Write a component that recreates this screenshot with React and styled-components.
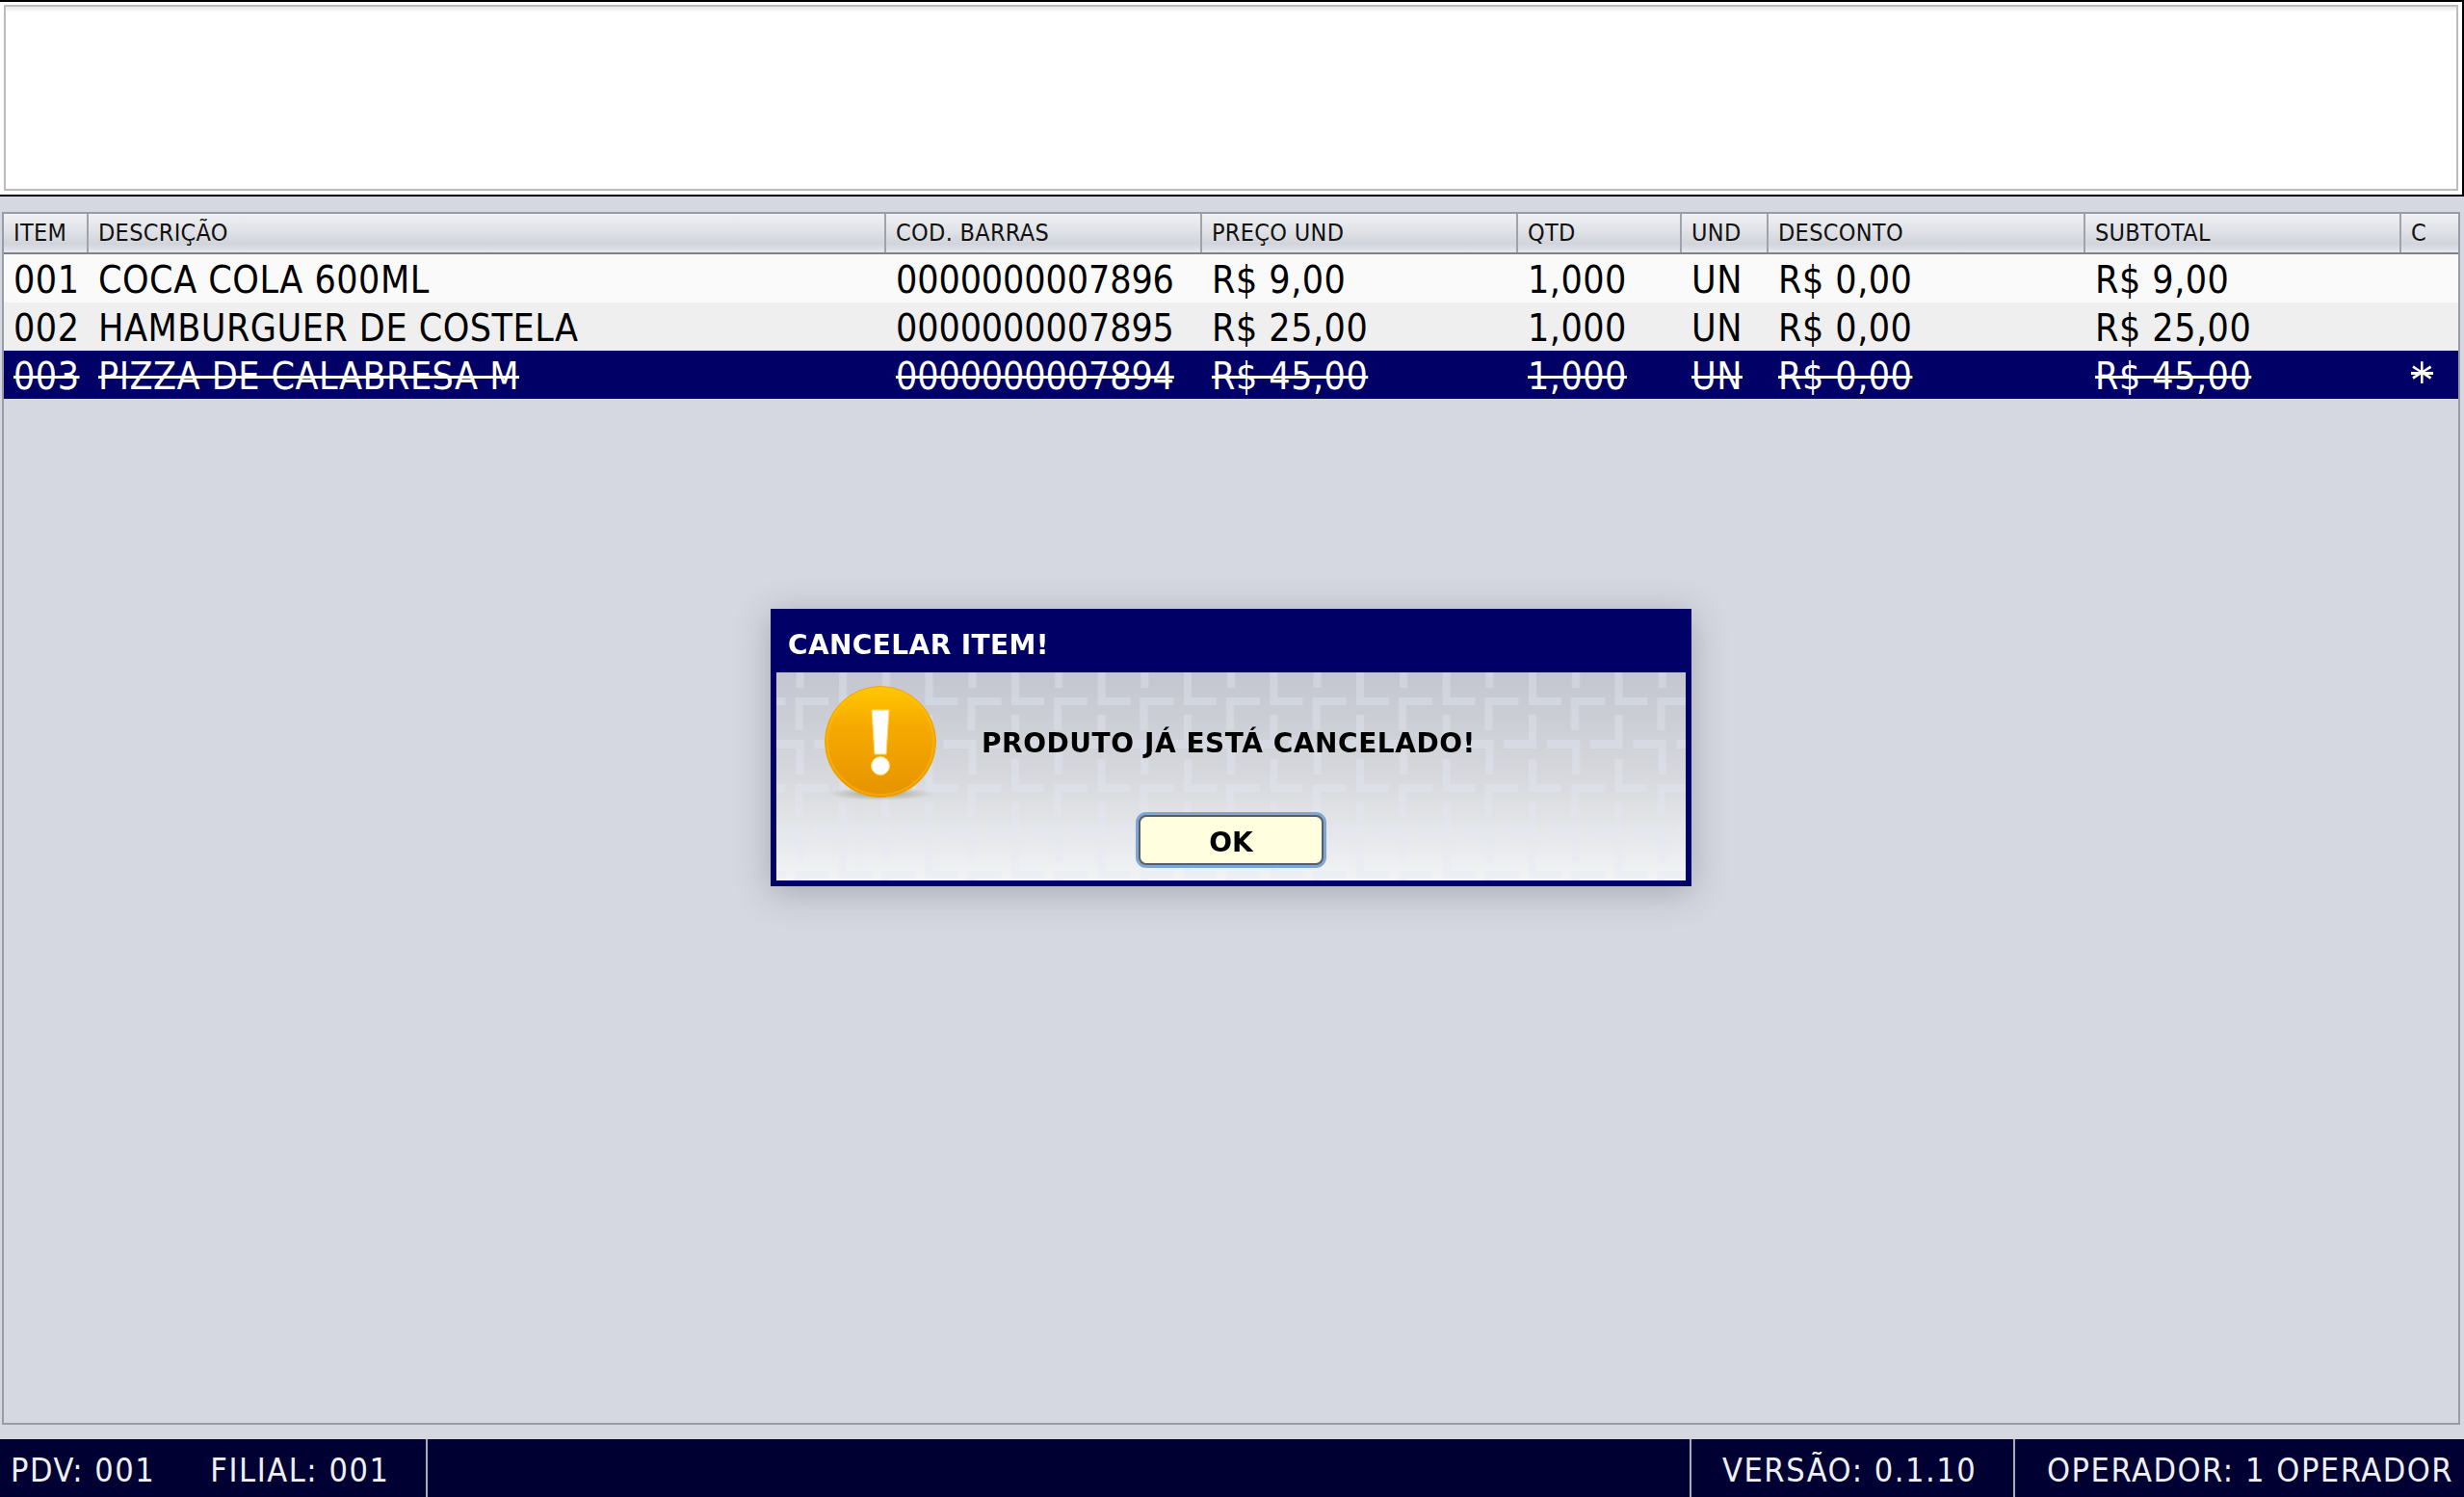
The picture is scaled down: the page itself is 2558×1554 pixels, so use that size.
import React from 'react'
import styled, { createGlobalStyle } from 'styled-components'

const COLUMNS = '88px 828px 328px 328px 170px 90px 329px 328px 59px'

const HEADERS = ['ITEM', 'DESCRIÇÃO', 'COD. BARRAS', 'PREÇO UND', 'QTD', 'UND', 'DESCONTO', 'SUBTOTAL', 'C']

const ITEMS = [
  ['001', 'COCA COLA 600ML', '0000000007896', 'R$ 9,00', '1,000', 'UN', 'R$ 0,00', 'R$ 9,00', ''],
  ['002', 'HAMBURGUER DE COSTELA', '0000000007895', 'R$ 25,00', '1,000', 'UN', 'R$ 0,00', 'R$ 25,00', ''],
  ['003', 'PIZZA DE CALABRESA M', '0000000007894', 'R$ 45,00', '1,000', 'UN', 'R$ 0,00', 'R$ 45,00', '*'],
]

const BARCODE_COLUMN = 2
const MARK_COLUMN = 8

const GlobalStyle = createGlobalStyle`
  html, body {
    margin: 0;
    padding: 0;
    background: #d5d8e1;
  }
`

const Page = styled.div`
  display: flex;
  flex-direction: column;
  width: 2558px;
  height: 1554px;
  overflow: hidden;
  font-family: 'DejaVu Sans', sans-serif;
  color: #000;
`

const TopPanel = styled.div`
  box-sizing: border-box;
  height: 204px;
  padding: 3px 4px 4px 4px;
  background: #fff;
  border-top: 2px solid #000;
  border-bottom: 2px solid #000;
  border-right: 2px solid #000;
`

const Display = styled.div`
  box-sizing: border-box;
  height: 100%;
  background: linear-gradient(#e8e8e8, #fff 6px);
  border: 2px solid #bcbcbc;
`

const TablePanel = styled.div`
  flex: 1;
  margin: 16px 4px 15px 2px;
  border: 2px solid #999ca6;
`

const HeaderRow = styled.div`
  display: grid;
  grid-template-columns: ${COLUMNS};
  height: 40px;
  border-bottom: 2px solid #7f828a;
  background: linear-gradient(#eff0f3 0%, #e2e4e9 40%, #d1d4da 78%, #e6e8ef 100%);
`

const HeaderCell = styled.div`
  box-sizing: border-box;
  display: flex;
  align-items: center;
  padding: 0 0 2px 10px;
  font-size: 25px;
  font-stretch: condensed;
  letter-spacing: 0.3px;
  white-space: nowrap;
  color: #111;
  border-right: ${(p) => (p.$last ? 'none' : '2px solid #9fa3ab')};
`

const ItemRow = styled.div`
  display: grid;
  grid-template-columns: ${COLUMNS};
  grid-template-rows: 50px;
  height: 50px;
  background: ${(p) => p.$bg};
  color: ${(p) => p.$fg};
`

const ItemCell = styled.div`
  display: flex;
  align-items: center;
  padding-left: 10px;
  padding-top: 2px;
  font-size: 39px;
  font-stretch: condensed;
  letter-spacing: ${(p) => (p.$tight ? '-0.1px' : '0.5px')};
  white-space: nowrap;
  text-decoration: ${(p) => (p.$struck ? 'line-through' : 'none')};
`

// the C column has a bigger asterisk, crossed through its middle
const MarkCell = styled.div`
  display: flex;
  align-items: center;
  padding: 12px 0 0 10px;
  font-size: 50px;
  font-stretch: condensed;
  white-space: nowrap;
`

const Mark = styled.span`
  background: linear-gradient(#fff, #fff) 0 20px / 100% 3px no-repeat;
`

const Footer = styled.div`
  display: flex;
  align-items: stretch;
  height: 60px;
  background: #000033;
  color: #eef0f6;
  font-size: 34px;
  font-stretch: condensed;
  letter-spacing: 1.55px;
  white-space: nowrap;
`

const FooterCell = styled.div`
  display: flex;
  align-items: center;
  gap: ${(p) => p.$gap || 0}px;
  flex: ${(p) => (p.$width ? 'none' : 1)};
  box-sizing: border-box;
  width: ${(p) => (p.$width ? `${p.$width}px` : 'auto')};
  padding-left: ${(p) => p.$pad || 0}px;
  padding-top: 4px;
  border-right: ${(p) => (p.$divider ? '2px solid #a9adb8' : 'none')};
`

const Overlay = styled.div`
  position: fixed;
  inset: 0;
  display: flex;
  align-items: center;
  justify-content: center;
  padding: 0 2px 2px 0;
`

const Dialog = styled.div`
  display: flex;
  flex-direction: column;
  width: 956px;
  height: 288px;
  box-sizing: border-box;
  border: 6px solid #000066;
  border-top: none;
  background: #000066;
  box-shadow: 0 6px 34px rgba(60, 60, 66, 0.3);
`

const DialogTitle = styled.div`
  display: flex;
  align-items: center;
  height: 66px;
  padding: 8px 0 0 12px;
  box-sizing: border-box;
  font-size: 28px;
  font-weight: bold;
  letter-spacing: 0.4px;
  color: #fff;
`

const DialogBody = styled.div`
  position: relative;
  flex: 1;
  display: flex;
  flex-direction: column;
  padding-top: 12px;
  background: linear-gradient(#c3c6cf 0%, #d6d8dd 50%, #f2f3f5 100%);
  overflow: hidden;
`

const Tiles = styled.svg`
  position: absolute;
  inset: 0;
  width: 100%;
  height: 100%;
`

const MessageRow = styled.div`
  position: relative;
  display: flex;
  align-items: center;
  gap: 42px;
  padding-left: 45px;
`

const Message = styled.div`
  font-size: 28px;
  font-weight: bold;
  letter-spacing: 0.55px;
  padding-bottom: 2px;
  color: #000;
`

const OkButton = styled.button`
  position: relative;
  align-self: center;
  box-sizing: border-box;
  width: 192px;
  height: 52px;
  margin: 12px 0 0 0;
  padding: 4px 0 0 0;
  font-family: inherit;
  font-size: 28px;
  font-weight: bold;
  color: #000;
  background: #ffffe0;
  border: 2px solid #5a5d66;
  border-radius: 8px;
  box-shadow: 0 0 0 3px #7ba7d2;
`

const TilePattern = () => (
  <Tiles>
    <defs>
      <pattern id="tile" x="65" y="0" width="89.5" height="90" patternUnits="userSpaceOnUse">
        <g fill="#e4e9f4" fillOpacity="0.36">
          <path d="M0 0h8v26h26v8H0z" />
          <path d="M45 0h8v16h-8z" />
          <path d="M44 26h35v8H52v26h-8z" />
          <path d="M0 44h8v35H-26v-9H0z" />
          <path d="M64 70h26v9H64z" />
          <path d="M19 70h34v35h-8V79H19z" />
        </g>
      </pattern>
    </defs>
    <rect width="100%" height="100%" fill="url(#tile)" />
  </Tiles>
)

const WarningIcon = () => (
  <svg width="126" height="124" viewBox="0 0 126 124">
    <defs>
      <linearGradient id="coin" x1="0" y1="0" x2="0" y2="1">
        <stop offset="0" stopColor="#ffc800" />
        <stop offset="0.35" stopColor="#f6aa00" />
        <stop offset="1" stopColor="#e69300" />
      </linearGradient>
      <radialGradient id="ground">
        <stop offset="0" stopColor="#8a8f70" stopOpacity="0.75" />
        <stop offset="1" stopColor="#8a8f70" stopOpacity="0" />
      </radialGradient>
    </defs>
    <ellipse cx="63" cy="114" rx="54" ry="7" fill="url(#ground)" />
    <circle cx="63" cy="60" r="57.5" fill="url(#coin)" stroke="#f2a500" strokeWidth="1" />
    <circle cx="63" cy="60" r="55" fill="none" stroke="#ffc21a" strokeOpacity="0.45" strokeWidth="2" />
    <path d="M54 27h18l-3 46h-12z" fill="#fff" stroke="#ffd860" strokeWidth="1" />
    <circle cx="63" cy="85" r="9.5" fill="#fff" stroke="#ffd860" strokeWidth="1" />
  </svg>
)

const App = () => {
  return (
    <Page>
      <GlobalStyle />
      <TopPanel>
        <Display />
      </TopPanel>
      <TablePanel>
        <HeaderRow>
          {HEADERS.map((title, index) => (
            <HeaderCell key={title} $last={index === HEADERS.length - 1}>
              {title}
            </HeaderCell>
          ))}
        </HeaderRow>
        {ITEMS.map((item, rowIndex) => {
          const cancelled = rowIndex === 2
          const bg = cancelled ? '#000066' : rowIndex === 0 ? '#fafafa' : '#efefef'
          return (
            <ItemRow key={item[0]} $bg={bg} $fg={cancelled ? '#fff' : '#000'}>
              {item.map((value, index) =>
                index === MARK_COLUMN ? (
                  <MarkCell key={index}>{value && <Mark>{value}</Mark>}</MarkCell>
                ) : (
                  <ItemCell key={index} $struck={cancelled} $tight={index === BARCODE_COLUMN}>
                    {value}
                  </ItemCell>
                )
              )}
            </ItemRow>
          )
        })}
      </TablePanel>
      <Footer>
        <FooterCell $width={444} $pad={11} $gap={57} $divider>
          <span>PDV: 001</span>
          <span>FILIAL: 001</span>
        </FooterCell>
        <FooterCell $divider />
        <FooterCell $width={336} $pad={32} $divider>
          VERSÃO: 0.1.10
        </FooterCell>
        <FooterCell $width={466} $pad={33}>
          OPERADOR: 1 OPERADOR
        </FooterCell>
      </Footer>
      <Overlay>
        <Dialog>
          <DialogTitle>CANCELAR ITEM!</DialogTitle>
          <DialogBody>
            <TilePattern />
            <MessageRow>
              <WarningIcon />
              <Message>PRODUTO JÁ ESTÁ CANCELADO!</Message>
            </MessageRow>
            <OkButton>OK</OkButton>
          </DialogBody>
        </Dialog>
      </Overlay>
    </Page>
  )
}

export default App
